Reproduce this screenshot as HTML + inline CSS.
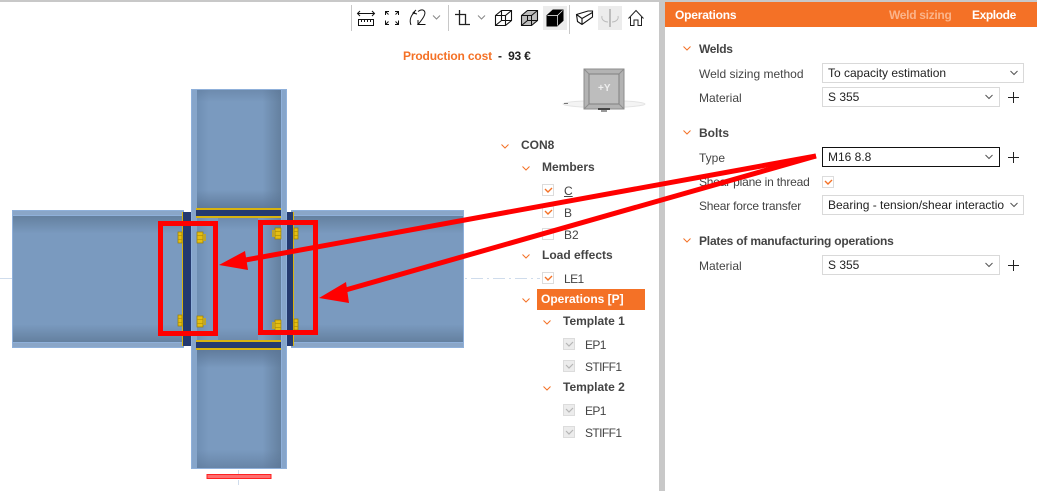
<!DOCTYPE html>
<html><head><meta charset="utf-8">
<style>
html,body{margin:0;padding:0;background:#fff;}
#p{position:relative;width:1037px;height:491px;overflow:hidden;background:#fff;font-family:"Liberation Sans",sans-serif;font-size:12px;color:#444;}
.t{position:absolute;white-space:nowrap;line-height:14px;}
.b{font-weight:bold;}
.dd{position:absolute;box-sizing:border-box;border:1px solid #d9d9d9;background:#fff;color:#222;padding-left:5px;line-height:18px;white-space:nowrap;overflow:hidden;}
svg{position:absolute;left:0;top:0;}
</style></head><body><div id="p">
<svg width="1037" height="491" viewBox="0 0 1037 491">
<defs>
<linearGradient id="v" x1="0" y1="0" x2="1" y2="0"><stop offset="0" stop-color="#6f8fb4"/><stop offset=".14" stop-color="#7a9abf"/><stop offset=".78" stop-color="#7a9abf"/><stop offset="1" stop-color="#64809f"/></linearGradient>
<linearGradient id="h" x1="0" y1="0" x2="0" y2="1"><stop offset="0" stop-color="#64809f"/><stop offset=".14" stop-color="#7a9abf"/><stop offset=".86" stop-color="#7a9abf"/><stop offset="1" stop-color="#64809f"/></linearGradient>
<linearGradient id="dn" x1="0" y1="0" x2="0" y2="1"><stop offset="0" stop-color="#5a7494" stop-opacity="0"/><stop offset="1" stop-color="#5a7494" stop-opacity=".8"/></linearGradient>
<linearGradient id="up" x1="0" y1="1" x2="0" y2="0"><stop offset="0" stop-color="#5a7494" stop-opacity="0"/><stop offset="1" stop-color="#5a7494" stop-opacity=".8"/></linearGradient>
<g id="bolt"><rect x="0" y="0" width="4" height="11" fill="#e4be12" stroke="#9a7d00" stroke-width=".7"/><path d="M.5 3.500H3.500M.5 7.500H3.500" stroke="#9a7d00" stroke-width=".6"/></g>
<g id="nut"><rect x="0" y="0" width="6" height="11" fill="#e4be12" stroke="#9a7d00" stroke-width=".7"/><path d="M.5 3.500H5.500M.5 7.500H5.500" stroke="#9a7d00" stroke-width=".6"/></g>
</defs>
<rect x="0" y="0" width="1037" height="2" fill="#c8c8c8"/>
<path d="M0 278.500H184M295 278.500H540" stroke="#cfdcec" stroke-width="1" stroke-dasharray="12 4 2 4"/>
<path d="M238.500 470V486" stroke="#cfdcec" stroke-width="1" stroke-dasharray="5 5"/>
<!-- beams -->
<rect x="12" y="210" width="172" height="138" fill="#8fb0da"/>
<rect x="13" y="216" width="171" height="126" fill="url(#h)"/>
<rect x="13" y="211" width="171" height="4" fill="#8aa6c8"/>
<rect x="13" y="343" width="171" height="4" fill="#8aa6c8"/>
<rect x="291" y="210" width="173" height="138" fill="#8fb0da"/>
<rect x="291" y="216" width="172" height="126" fill="url(#h)"/>
<rect x="291" y="211" width="172" height="4" fill="#8aa6c8"/>
<rect x="291" y="343" width="172" height="4" fill="#8aa6c8"/>
<!-- column -->
<rect x="191" y="89" width="96" height="380" fill="#8fb0da"/>
<rect x="197" y="90" width="84" height="378" fill="url(#v)"/>
<rect x="192" y="90" width="5" height="378" fill="#86a5ca"/>
<rect x="282" y="90" width="4" height="378" fill="#86a5ca"/>
<rect x="197" y="90" width="84" height="12" fill="url(#up)" opacity=".5"/>
<rect x="197" y="190" width="84" height="18" fill="url(#dn)"/>
<rect x="197" y="350" width="84" height="18" fill="url(#up)"/>
<rect x="197" y="450" width="84" height="18" fill="url(#dn)" opacity=".7"/>
<rect x="218" y="218" width="40" height="12" fill="url(#up)" opacity=".5"/>
<rect x="218" y="328" width="40" height="12" fill="url(#dn)" opacity=".5"/>
<!-- stiffeners -->
<rect x="196" y="208" width="85" height="2" fill="#d8b30f"/>
<rect x="196" y="210" width="85" height="6" fill="#243a70"/>
<rect x="196" y="216" width="85" height="2" fill="#d8b30f"/>
<rect x="196" y="340" width="85" height="2" fill="#d8b30f"/>
<rect x="196" y="342" width="85" height="6" fill="#243a70"/>
<rect x="196" y="348" width="85" height="2" fill="#d8b30f"/>
<!-- end plates -->
<rect x="183" y="212" width="8" height="134" fill="#243a70"/>
<rect x="287" y="212" width="6" height="134" fill="#243a70"/>
<rect x="182" y="212" width="1" height="134" fill="#d8b30f"/>
<rect x="293" y="212" width="1" height="134" fill="#d8b30f"/>
<!-- bolts -->
<use href="#bolt" x="178" y="232"/><use href="#bolt" x="178" y="315"/>
<use href="#nut" x="197" y="232"/><rect x="203" y="234" width="3" height="7" fill="#bfa52a"/>
<use href="#nut" x="197" y="316"/><rect x="203" y="318" width="3" height="7" fill="#bfa52a"/>
<use href="#bolt" x="294" y="228"/><use href="#bolt" x="294" y="319"/>
<use href="#nut" x="275" y="228"/><rect x="272" y="230" width="3" height="7" fill="#bfa52a"/>
<use href="#nut" x="275" y="320"/><rect x="272" y="322" width="3" height="7" fill="#bfa52a"/>
<!-- red support -->
<rect x="207" y="474.500" width="64" height="4" fill="#ff6f6f" stroke="#f22" stroke-width="1"/>
<!-- gizmo -->
<ellipse cx="604" cy="104" rx="41" ry="3.500" fill="#f4f4f4" stroke="#e4e4e4"/>
<rect x="564" y="103" width="4" height="1" fill="#777"/>
<rect x="584" y="69" width="40" height="40" fill="#b3b3b3" stroke="#8e8e8e"/>
<rect x="589" y="74" width="30" height="30" fill="#bdbdbd" stroke="#808080"/>
<path d="M584 69L589 74M624 69L619 74M584 109L589 104M624 109L619 104" stroke="#8e8e8e"/>
<rect x="598" y="108" width="12" height="2" fill="#444"/><rect x="601" y="110" width="6" height="2" fill="#999"/>
<!-- toolbar separators -->
<rect x="351" y="5" width="1" height="26" fill="#c8c8c8"/>
<rect x="448" y="5" width="1" height="26" fill="#c8c8c8"/>
<rect x="569" y="5" width="1" height="29" fill="#c8c8c8"/>
<rect x="543" y="6" width="24" height="24" fill="#ececec"/>
<rect x="598" y="6" width="24" height="24" fill="#ececec"/>
<g fill="none" stroke="#111" stroke-width="1">
<path d="M358 13.500H374M360 11L357.500 13.500L360 16M372 11L374.500 13.500L372 16"/>
<path d="M358.500 19.500H373.500V25.500H358.500ZM361.500 20V22M364.500 20V22M367.500 20V22M370.500 20V22"/>
<!-- fit: four small corner arrows -->
<path d="M385.500 15V11.500H389M385.500 11.500L388.500 14.500M398.500 15V11.500H395M398.500 11.500L395.500 14.500M385.500 20.500V24.500H389M385.500 24.500L388.500 21.500M398.500 20.500V24.500H395M398.500 24.500L395.500 21.500" stroke-width="1"/>
<!-- rotate: two opposed arcs -->
<path d="M415 12C411 15 409 20 411 25M416 10L413 13L417 14"/>
<path d="M418 11.500C423 8 426 11 424.500 15C423.500 18 421 21 418 24.500H425.500M418 24.500V20"/>
<path d="M433 15.500L436.500 19L440 15.500" stroke="#888"/>
<path d="M478 15.500L481.500 19L485 15.500" stroke="#888"/>
<!-- crop -->
<path d="M459.500 10V24.500H470M455 14.500H465.500V25" stroke="#222" stroke-width="1.300"/>
<!-- cube wire -->
<path d="M495.500 15.500L501.500 10.500H511.500V20.500L505.500 25.500H495.500ZM495.500 15.500H505.500V25.500M505.500 15.500L511.500 10.500M495.500 25.500L501.500 20.500H511.500M501.500 10.500V20.500" stroke-width="1.100"/>
<!-- cube grey -->
<path d="M521.500 15.500L527.500 10.500H537.500V20.500L531.500 25.500H521.500Z" fill="#bdbdbd" stroke-width="1.100"/>
<path d="M521.500 15.500H531.500V25.500M531.500 15.500L537.500 10.500M521.500 25.500L527.500 20.500H537.500M527.500 15V20.500" stroke-width="1"/>
<!-- cube solid -->
<path d="M547 15.500L553 10H563V20.500L557 26H547Z" fill="#000" stroke="#000"/>
<path d="M547.500 15.500H557.500V25.500M557.500 15.500L562.500 10.500" stroke="#fff" stroke-width=".7"/>
<!-- section -->
<path d="M576.500 14.500L588 11H592.500V17L582 24.500L577.500 21.500Z M576.500 14.500L582 18.500L592.500 12.500M582 18.500V24.500" stroke-width="1.100"/>
<!-- mirror disabled -->
<path d="M610 9V27" stroke="#bdbdbd" stroke-width="2"/>
<path d="M602 16C601 20 605 22 608 22M618 16C619 20 615 22 612 22" stroke="#bdbdbd"/>
<!-- home -->
<path d="M628.500 18.500L636 10.500L643.500 18.500M630.500 17V25.500H634V20H638V25.500H641.500V17" stroke="#222"/>
</g>
<!-- divider -->
<rect x="659" y="0" width="6" height="491" fill="#c8c8c8"/>
<rect x="665" y="2" width="372" height="25" fill="#f47126"/>
<rect x="537" y="289" width="108" height="21" fill="#f47126"/>
<g fill="none" stroke="#f47126" stroke-width="1">
<path d="M501.500 144.500L505 148L508.500 144.500M522.500 166.500L526 170L529.500 166.500M522.500 254.500L526 258L529.500 254.500M522.500 298.500L526 302L529.500 298.500M543.500 320.500L547 324L550.500 320.500M543.500 386.500L547 390L550.500 386.500"/>
<path d="M683.500 46.500L687 50L690.500 46.500M683.500 130.500L687 134L690.500 130.500M683.500 238.500L687 242L690.500 238.500"/>
</g>
<g fill="#fff" stroke="#dcdcdc">
<rect x="542.500" y="184.500" width="11" height="11"/><rect x="542.500" y="206.500" width="11" height="11"/><rect x="542.500" y="228.500" width="11" height="11"/><rect x="542.500" y="272.500" width="11" height="11"/>
<rect x="822.500" y="176.500" width="11" height="11"/>
</g>
<g fill="#ececec" stroke="#dcdcdc">
<rect x="563.500" y="338.500" width="11" height="11"/><rect x="563.500" y="360.500" width="11" height="11"/><rect x="563.500" y="404.500" width="11" height="11"/><rect x="563.500" y="426.500" width="11" height="11"/>
</g>
<g fill="none" stroke="#f47126" stroke-width="1.400">
<path d="M545 189L548 192L552 188M545 211L548 214L552 210M545 277L548 280L552 276M825 181L828 184L832 180"/>
</g>
<g fill="none" stroke="#b5b5b5" stroke-width="1.200">
<path d="M566 343L569 346L573 342M566 365L569 368L573 364M566 409L569 412L573 408M566 431L569 434L573 430"/>
</g>
</svg>

<div class="t b" style="left:403px;top:49px;color:#f47126;letter-spacing:-.16px;">Production cost</div>
<div class="t b" style="left:498px;top:49px;color:#222;letter-spacing:-.2px;">-&nbsp; 93 €</div>
<div class="t b" style="left:598px;top:84px;color:#eee;font-size:10px;line-height:10px;">+Y</div>

<div class="t b" style="left:521px;top:138px;">CON8</div>
<div class="t b" style="left:542px;top:160px;">Members</div>
<div class="t" style="left:564px;top:184px;text-decoration:underline;">C</div>
<div class="t" style="left:564px;top:206px;">B</div>
<div class="t" style="left:564px;top:228px;">B2</div>
<div class="t b" style="left:542px;top:248px;">Load effects</div>
<div class="t" style="left:564px;top:272px;letter-spacing:-.6px;">LE1</div>
<div class="t b" style="left:541px;top:292px;color:#fff;">Operations [P]</div>
<div class="t b" style="left:563px;top:314px;">Template 1</div>
<div class="t" style="left:585px;top:338px;letter-spacing:-.6px;">EP1</div>
<div class="t" style="left:585px;top:360px;letter-spacing:-.6px;">STIFF1</div>
<div class="t b" style="left:563px;top:380px;">Template 2</div>
<div class="t" style="left:585px;top:404px;letter-spacing:-.6px;">EP1</div>
<div class="t" style="left:585px;top:426px;letter-spacing:-.6px;">STIFF1</div>

<div class="t b" style="left:675px;top:8px;color:#fff;letter-spacing:-.2px;">Operations</div>
<div class="t b" style="left:889px;top:8px;color:#fbb48a;letter-spacing:-.3px;">Weld sizing</div>
<div class="t b" style="left:972px;top:8px;color:#fff;letter-spacing:-.4px;">Explode</div>

<div class="t b" style="left:699px;top:42px;letter-spacing:-.3px;">Welds</div>
<div class="t" style="left:699px;top:67px;">Weld sizing method</div>
<div class="dd" style="left:822px;top:63px;width:202px;height:20px;">To capacity estimation</div>
<div class="t" style="left:699px;top:91px;">Material</div>
<div class="dd" style="left:822px;top:87px;width:178px;height:20px;">S 355</div>
<div class="t b" style="left:699px;top:126px;">Bolts</div>
<div class="t" style="left:699px;top:151px;">Type</div>
<div class="dd" style="left:822px;top:147px;width:178px;height:20px;border-color:#111;">M16 8.8</div>
<div class="t" style="left:699px;top:175px;letter-spacing:-.2px;">Shear plane in thread</div>
<div class="t" style="left:699px;top:199px;letter-spacing:-.2px;">Shear force transfer</div>
<div class="dd" style="left:822px;top:195px;width:202px;height:20px;"><span style="display:block;width:180px;overflow:hidden;">Bearing - tension/shear interactio</span></div>
<div class="t b" style="left:699px;top:234px;letter-spacing:-.2px;">Plates of manufacturing operations</div>
<div class="t" style="left:699px;top:259px;">Material</div>
<div class="dd" style="left:822px;top:255px;width:178px;height:20px;">S 355</div>

<svg width="1037" height="491" viewBox="0 0 1037 491" style="pointer-events:none">
<g fill="none" stroke="#555" stroke-width="1">
<path d="M1010.500 71L1014 74.500L1017.500 71M985.500 95L989 98.500L992.500 95M985.500 155L989 158.500L992.500 155M1010.500 203L1014 206.500L1017.500 203M985.500 263L989 266.500L992.500 263"/>
</g>
<g fill="none" stroke="#222" stroke-width="1">
<path d="M1008 97.500H1019M1013.500 92V103M1008 157.500H1019M1013.500 152V163M1008 265.500H1019M1013.500 260V271"/>
</g>
<g fill="none" stroke="#ff0000" stroke-width="5">
<rect x="160.500" y="223.500" width="55" height="110"/>
<rect x="260.500" y="222.500" width="55" height="110"/>
</g>
<g stroke="#ff0000" stroke-width="5" fill="none">
<path d="M816 156L240 261"/>
<path d="M816 156L342 291"/>
</g>
<path d="M219 265L245 251L248 270Z" fill="#ff0000"/>
<path d="M319 298L346 282L349 303Z" fill="#ff0000"/>
</svg>
</div></body></html>
